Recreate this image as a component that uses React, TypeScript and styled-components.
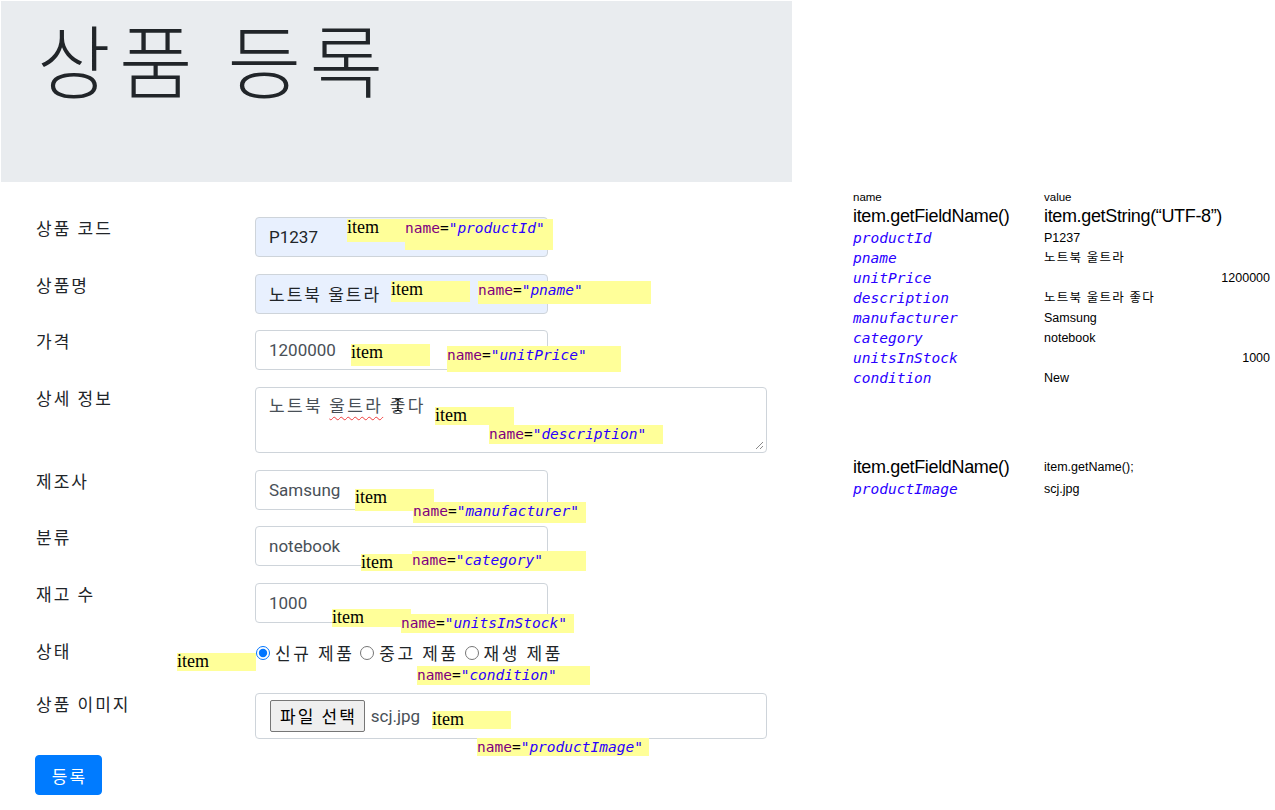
import React from "react";
import styled, { createGlobalStyle } from "styled-components";

const GlobalStyle = createGlobalStyle`
  html, body {
    margin: 0;
    padding: 0;
    background: #fff;
  }
  body {
    font-family: Roboto, "Noto Sans CJK KR", sans-serif;
    color: #212529;
  }
  * {
    box-sizing: border-box;
  }
`;

const Page = styled.div`
  position: relative;
  display: flex;
  width: 1275px;
  height: 810px;
  overflow: hidden;
`;

const LeftColumn = styled.div`
  width: 792px;
  flex-shrink: 0;
`;

const Jumbotron = styled.header`
  margin: 1px 0 0 1px;
  height: 181px;
  background: #e9ecef;
  padding: 8px 0 0 36px;
`;

const Title = styled.h1`
  margin: 0;
  font-family: "Noto Sans CJK KR", sans-serif;
  font-weight: 300;
  font-size: 80px;
  line-height: 96px;
  letter-spacing: 8.5px;
  color: #212529;
`;

const Form = styled.form`
  padding: 35px 0 0 36px;
`;

const FormRow = styled.div<{ $gap?: number }>`
  display: flex;
  align-items: flex-start;
  margin-bottom: ${(p) => p.$gap ?? 16.7}px;
`;

const Label = styled.label`
  width: 219px;
  flex-shrink: 0;
  font-size: 17px;
  line-height: 25.5px;
  letter-spacing: 2px;
  color: #212529;
`;

const TextInput = styled.input<{ $filled?: boolean; $ko?: boolean }>`
  width: 293px;
  height: 40px;
  padding: 0 13px;
  border: 1px solid #ced4da;
  border-radius: 4px;
  background: ${(p) => (p.$filled ? "#e8f0fe" : "#fff")};
  color: ${(p) => (p.$filled ? "#212529" : "#495057")};
  font-family: Roboto, "Noto Sans CJK KR", sans-serif;
  font-size: 17px;
  letter-spacing: ${(p) => (p.$ko ? 2 : 0)}px;
  outline: none;
`;

const TextArea = styled.div`
  position: relative;
  width: 512px;
  height: 66px;
  padding: 6px 13px;
  border: 1px solid #ced4da;
  border-radius: 4px;
  font-size: 17px;
  line-height: 25.5px;
  letter-spacing: 2.3px;
  color: #495057;
`;

const Misspelled = styled.span`
  text-decoration: underline wavy #f03c3c;
  text-decoration-skip-ink: none;
  text-underline-offset: 4px;
  text-decoration-thickness: 1.3px;
`;

const ResizeGrip = styled.svg`
  position: absolute;
  right: 2px;
  bottom: 2px;
`;

const TextCursor = styled.svg`
  position: absolute;
  left: 138px;
  top: 10px;
`;

const RadioGroup = styled.div`
  display: flex;
  align-items: center;
  height: 25.5px;
  font-size: 17px;
  letter-spacing: 2.5px;
`;

const RadioOption = styled.label`
  display: inline-flex;
  align-items: center;
  margin-right: 5px;
  color: #212529;
`;

const Radio = styled.input`
  width: 14px;
  height: 14px;
  margin: 0 5px 0 1px;
  accent-color: #0075ff;
`;

const FileBox = styled.div`
  width: 512px;
  height: 46px;
  display: flex;
  align-items: center;
  gap: 6px;
  padding: 0 14px;
  border: 1px solid #ced4da;
  border-radius: 4px;
`;

const FileButton = styled.button`
  height: 32px;
  padding: 0 7px 0 9px;
  background: #efefef;
  border: 1px solid #767676;
  border-radius: 2px;
  font-family: Roboto, "Noto Sans CJK KR", sans-serif;
  font-size: 17px;
  letter-spacing: 2px;
  color: #000;
`;

const FileName = styled.span`
  font-size: 17px;
  color: #495057;
`;

const SubmitButton = styled.button`
  margin-left: -1px;
  width: 67px;
  height: 40px;
  padding: 0 0 0 2px;
  background: #007bff;
  border: 1px solid #007bff;
  border-radius: 4px;
  color: #fff;
  font-family: Roboto, "Noto Sans CJK KR", sans-serif;
  font-size: 17px;
  letter-spacing: 2px;
`;

// 노란 메모 (스크린샷 위에 붙인 주석)
const Tag = styled.span<{ $x: number; $y: number; $w: number; $h: number }>`
  position: absolute;
  left: ${(p) => p.$x}px;
  top: ${(p) => p.$y}px;
  width: ${(p) => p.$w}px;
  height: ${(p) => p.$h}px;
  background: #ffff99;
  white-space: nowrap;
  overflow: visible;
`;

const ItemTag = styled(Tag)`
  font-family: "Liberation Serif", serif;
  font-size: 18px;
  line-height: 17px;
  color: #000;
`;

const NameTag = styled(Tag)`
  font-family: "DejaVu Sans Mono", monospace;
  font-size: 14.5px;
  line-height: 18px;
  color: #000;
`;

const AttrName = styled.span`
  color: #7f007f;
`;

const AttrValue = styled.span`
  color: #2a00ff;
  font-style: italic;
`;

const FieldPanel = styled.aside`
  margin-left: 61px;
  padding-top: 190px;
  width: 417px;
  font-family: "Liberation Sans", "Noto Sans CJK KR", sans-serif;
  color: #000;
`;

const FieldGrid = styled.div<{ $top?: number }>`
  display: grid;
  grid-template-columns: 191px 226px;
  margin-top: ${(p) => p.$top ?? 0}px;
`;

const HeadCell = styled.div`
  font-size: 11.5px;
  line-height: 14px;
`;

const MethodCell = styled.div<{ $small?: boolean }>`
  font-size: ${(p) => (p.$small ? 12.5 : 18)}px;
  line-height: 24px;
  letter-spacing: ${(p) => (p.$small ? 0 : -0.35)}px;
  white-space: nowrap;
`;

const KeyCell = styled.div`
  font-family: "DejaVu Sans Mono", monospace;
  font-style: italic;
  color: #2a00ff;
  font-size: 14.5px;
  line-height: 20px;
`;

const ValueCell = styled.div<{ $num?: boolean; $ko?: boolean }>`
  font-size: 12.5px;
  line-height: 20px;
  letter-spacing: ${(p) => (p.$ko ? 1.2 : 0)}px;
  text-align: ${(p) => (p.$num ? "right" : "left")};
`;

const itemTags = [
  [347, 219, 58, 23],
  [391, 281, 79, 21],
  [351, 344, 79, 22],
  [435, 407, 79, 18],
  [355, 489, 79, 22],
  [361, 554, 51, 17],
  [332, 609, 79, 18],
  [177, 653, 79, 18],
  [432, 711, 79, 18],
];

const nameTags: [number, number, number, number, string][] = [
  [405, 219, 148, 31, "productId"],
  [478, 281, 173, 23, "pname"],
  [447, 346, 174, 26, "unitPrice"],
  [489, 425, 174, 19, "description"],
  [413, 502, 173, 21, "manufacturer"],
  [412, 551, 174, 20, "category"],
  [401, 614, 173, 19, "unitsInStock"],
  [417, 666, 173, 19, "condition"],
  [477, 738, 172, 18, "productImage"],
];

const fields: { key: string; value: string; num?: boolean }[] = [
  { key: "productId", value: "P1237" },
  { key: "pname", value: "노트북 울트라" },
  { key: "unitPrice", value: "1200000", num: true },
  { key: "description", value: "노트북 울트라 좋다" },
  { key: "manufacturer", value: "Samsung" },
  { key: "category", value: "notebook" },
  { key: "unitsInStock", value: "1000", num: true },
  { key: "condition", value: "New" },
];

const hasHangul = (s: string) => /[가-힣]/.test(s);

export default function App() {
  return (
    <>
      <GlobalStyle />
      <Page>
        <LeftColumn>
          <Jumbotron>
            <Title>상품 등록</Title>
          </Jumbotron>
          <Form onSubmit={(e) => e.preventDefault()}>
            <FormRow>
              <Label>상품 코드</Label>
              <TextInput $filled readOnly value="P1237" />
            </FormRow>
            <FormRow>
              <Label>상품명</Label>
              <TextInput $filled $ko readOnly value="노트북 울트라" />
            </FormRow>
            <FormRow>
              <Label>가격</Label>
              <TextInput readOnly value="1200000" />
            </FormRow>
            <FormRow>
              <Label>상세 정보</Label>
              <TextArea>
                노트북 <Misspelled>울트라</Misspelled> 좋다
                <TextCursor width="8" height="14" viewBox="0 0 8 14">
                  <path
                    d="M1 1h2l1 1 1-1h2M4 2v10M1 13h2l1-1 1 1h2"
                    fill="none"
                    stroke="#000"
                    strokeWidth="1"
                  />
                </TextCursor>
                <ResizeGrip width="10" height="10" viewBox="0 0 10 10">
                  <path d="M9 2L2 9M9 6L6 9" stroke="#8a8a8a" strokeWidth="1" />
                </ResizeGrip>
              </TextArea>
            </FormRow>
            <FormRow>
              <Label>제조사</Label>
              <TextInput readOnly value="Samsung" />
            </FormRow>
            <FormRow>
              <Label>분류</Label>
              <TextInput readOnly value="notebook" />
            </FormRow>
            <FormRow>
              <Label>재고 수</Label>
              <TextInput readOnly value="1000" />
            </FormRow>
            <FormRow $gap={27.4}>
              <Label>상태</Label>
              <RadioGroup>
                <RadioOption>
                  <Radio type="radio" name="condition" defaultChecked />
                  신규 제품
                </RadioOption>
                <RadioOption>
                  <Radio type="radio" name="condition" />
                  중고 제품
                </RadioOption>
                <RadioOption>
                  <Radio type="radio" name="condition" />
                  재생 제품
                </RadioOption>
              </RadioGroup>
            </FormRow>
            <FormRow>
              <Label>상품 이미지</Label>
              <FileBox>
                <FileButton type="button">파일 선택</FileButton>
                <FileName>scj.jpg</FileName>
              </FileBox>
            </FormRow>
            <SubmitButton type="submit">등록</SubmitButton>
          </Form>
        </LeftColumn>

        <FieldPanel>
          <FieldGrid>
            <HeadCell>name</HeadCell>
            <HeadCell>value</HeadCell>
            <MethodCell>item.getFieldName()</MethodCell>
            <MethodCell>item.getString(“UTF-8”)</MethodCell>
            {fields.map((f) => (
              <React.Fragment key={f.key}>
                <KeyCell>{f.key}</KeyCell>
                <ValueCell $num={f.num} $ko={hasHangul(f.value)}>
                  {f.value}
                </ValueCell>
              </React.Fragment>
            ))}
          </FieldGrid>
          <FieldGrid $top={67}>
            <MethodCell>item.getFieldName()</MethodCell>
            <MethodCell $small>item.getName();</MethodCell>
            <KeyCell>productImage</KeyCell>
            <ValueCell>scj.jpg</ValueCell>
          </FieldGrid>
        </FieldPanel>

        {itemTags.map(([x, y, w, h], i) => (
          <ItemTag key={`item-${i}`} $x={x} $y={y} $w={w} $h={h}>
            item
          </ItemTag>
        ))}
        {nameTags.map(([x, y, w, h, name]) => (
          <NameTag key={name} $x={x} $y={y} $w={w} $h={h}>
            <AttrName>name</AttrName>=<AttrValue>"{name}"</AttrValue>
          </NameTag>
        ))}
      </Page>
    </>
  );
}
